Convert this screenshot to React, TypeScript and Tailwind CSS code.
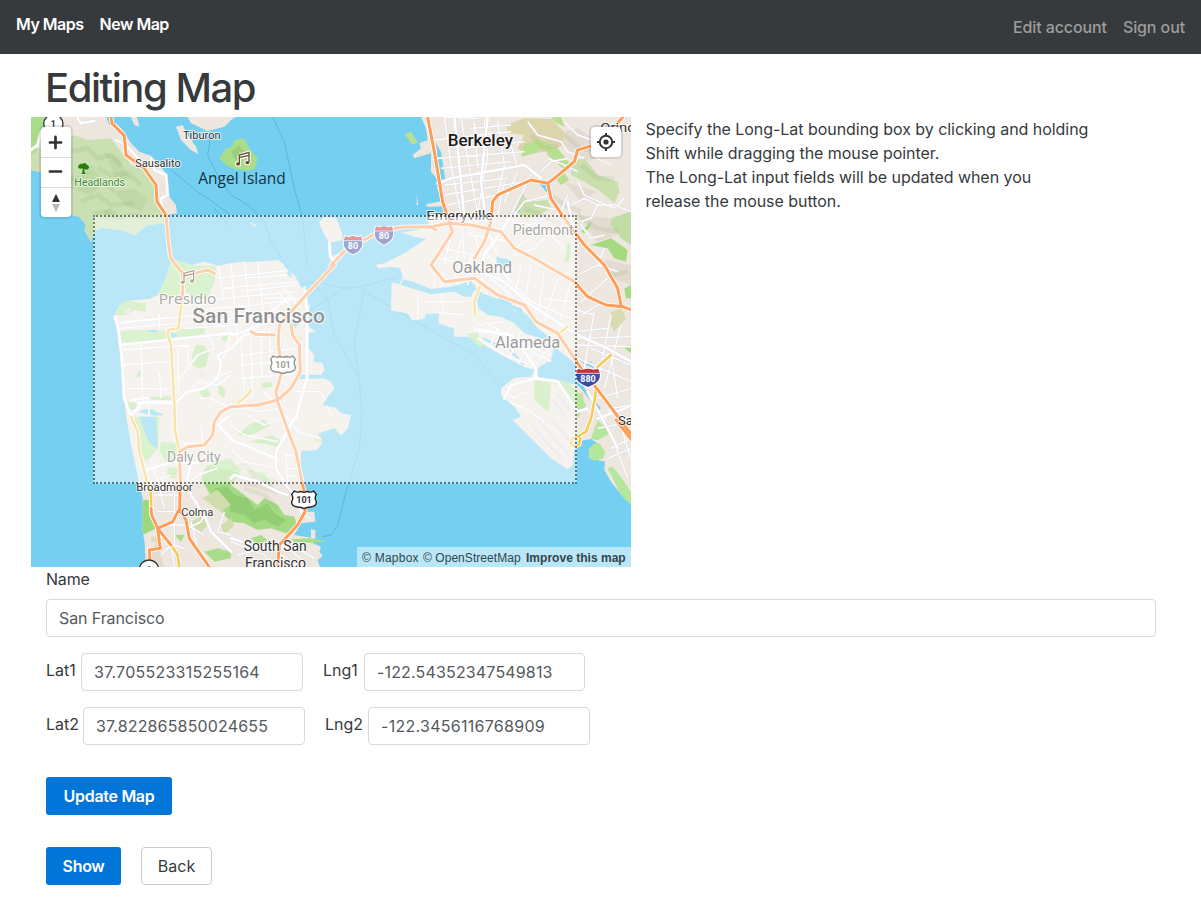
import React from "react";
import { Plus, Minus } from "lucide-react";

const LAND = "#eee7e0";
const WATER = "#75cff0";

const MARIN =
  "M0 6H225L235 30 255 25 275 45 300 85 325 110 360 122 385 150 405 175 413 215 415 245 435 270 438 295 405 300 400 325 350 330 310 360 270 345 210 338 190 350 180 382 160 345 165 330 145 305 120 300 60 300 30 172 0 165Z";
const HEADLANDS =
  "M0 165V110L40 90 90 85 130 60 170 75 240 70 270 110 300 150 335 165 370 200 378 270 400 300 400 325 350 330 310 360 270 345 210 338 190 350 180 382 160 345 165 330 145 305 120 300 60 300 30 172Z";
const TIBURON =
  "M470 6 480 25 530 48 580 35 600 15 615 6ZM435 35 455 30 470 60 495 95 502 118 480 105 450 75ZM300 6H318L325 35 310 30Z";
const PENINSULA =
  "M252 605 255 590 265 572 285 558 320 555 355 552 380 540 395 510 408 480 415 455 425 432 450 440 480 450 520 440 560 452 600 444 640 440 680 440 740 435 755 445 770 465 790 480 810 515 825 545 830 580 838 560 830 632 855 650 830 655 828 680 832 700 850 720 848 740 875 745 880 765 870 780 805 778 805 792 880 790 900 800 910 822 895 840 880 860 875 870 915 878 930 895 960 900 950 940 930 962 910 940 860 956 875 985 855 1005 810 1008 808 1070 815 1110 818 1190 850 1190 853 1220 810 1225 790 1260 840 1268 840 1243 853 1245 853 1270 845 1285 870 1295 865 1310 875 1322 860 1335 868 1360 342 1360 342 1290 335 1250 335 1150 325 1110 315 1060 300 990 285 900 280 850 270 720 262 640Z";
const EASTBAY =
  "M1170 6 1185 40 1190 75 1165 85 1170 100 1145 120 1150 130 1200 115 1200 170 1225 200 1218 218 1235 258 1185 268 1190 276 1238 274 1245 292 1192 302 1192 330 1160 345 1110 352 1150 365 1185 372 1125 412 1060 445 1035 450 1042 460 1080 455 1108 460 1115 485 1130 500 1082 503 1080 586 1130 596 1142 616 1180 612 1184 597 1225 595 1222 625 1268 640 1270 665 1310 665 1345 682 1420 725 1480 755 1512 765 1500 785 1450 788 1410 820 1410 840 1450 875 1470 905 1445 915 1500 970 1560 1030 1610 1062 1625 1050 1632 980 1680 972 1700 985 1675 1000 1675 1030 1722 1040 1720 1065 1740 1100 1780 1150 1802 1170V6Z";

const GREENS: [string, string][] = [
  ["#a9dd8a", "M0 6H45L30 50 15 110 0 118Z"],
  ["#a9dd8a", "M565 130 585 100 600 98 610 75 640 70 658 105 680 130 672 160 655 168 610 162 585 150Z"],
  ["#b6e59c", "M415 450 425 432 450 440 480 450 555 452 552 500 530 545 490 560 470 530 440 545 395 545 380 540 408 480Z"],
  ["#b7e49a", "M252 600 265 572 285 558 345 565 345 590 310 585 290 600Z"],
  ["#b6e59c", "M268 650 300 645 410 648 430 655 440 645 520 632 522 655 470 668 420 680 340 680 272 690Z"],
  ["#b0e296", "M484 720 495 690 520 692 535 710 525 755 500 760 482 750ZM505 830 530 820 540 840 520 850ZM560 805 585 825 580 850 565 840ZM355 845 420 845 420 857 370 858ZM290 860 320 865 310 885 290 880ZM320 770 332 765 332 785 315 787ZM570 670 590 655 595 670 580 682Z"],
  ["#b6e59c", "M310 905 385 905 382 1000 345 1040 325 1000ZM390 980 440 985 440 1040 410 1045 385 1010ZM410 1060 440 1055 438 1090 405 1088Z"],
  ["#9fd87c", "M335 1155 355 1155 360 1190 375 1240 335 1260Z"],
  ["#b6e59c", "M515 1070 550 1040 600 1030 620 1060 700 1075 720 1110 640 1060 600 1090 560 1110Z"],
  ["#a4da83", "M510 1090 530 1050 590 1065 630 1075 600 1110 680 1170 700 1150 740 1170 760 1200 790 1205 800 1235 780 1260 720 1240 680 1245 640 1225 600 1220 560 1180Z"],
  ["#92cd73", "M550 1120 590 1115 610 1140 650 1150 670 1185 710 1165 730 1195 765 1215 740 1235 700 1215 670 1225 640 1200 600 1190 585 1150Z"],
  ["#b0e296", "M620 960 660 925 700 915 720 930 690 945 650 965ZM660 980 720 960 760 980 740 995 690 985ZM690 805 720 800 725 815 695 820ZM580 1090 600 1085 600 1110Z"],
  ["#cfdeab", "M480 1220 510 1205 535 1225 510 1250 480 1240ZM515 1150 560 1125 600 1170 570 1190ZM570 1230 600 1210 610 1230 580 1260Z"],
  ["#a9dd8a", "M520 1310 560 1300 600 1310 600 1330 550 1340ZM660 1270 690 1260 710 1275 680 1290ZM430 1260 460 1260 450 1280ZM780 1273 840 1270 885 1278 850 1283 790 1282Z"],
  ["#dcd5ab", "M1425 30 1480 10 1560 12 1600 50 1590 95 1540 110 1480 120 1460 100 1480 60 1430 55Z"],
  ["#b7e08f", "M1480 90 1520 75 1560 85 1510 115 1470 125ZM1540 90 1580 100 1620 150 1600 165 1550 120ZM1560 6H1590L1600 35 1570 20ZM1570 185 1600 175 1615 195 1590 210ZM1120 58 1140 50 1160 82 1145 90Z"],
  ["#c9dfae", "M1450 285 1475 235 1490 260 1550 255 1560 280 1490 315ZM1620 140 1660 130 1700 180 1760 200 1765 230 1750 265 1710 230 1660 200 1620 180Z"],
  ["#bfdda4", "M1740 310 1800 290V390L1770 370 1740 330Z"],
  ["#a5da80", "M1680 390 1740 370 1790 405 1785 440 1750 430 1730 400ZM1780 520 1802 510V550H1785ZM1780 700 1802 690V715ZM1650 350 1680 320 1675 340 1660 355Z"],
  ["#d9dcb0", "M1740 590 1770 580 1785 610 1750 650 1735 625ZM1630 840 1655 830 1660 860 1630 870Z"],
  ["#b4e69b", "M1305 655 1340 655 1355 690 1350 700 1330 680ZM1510 795 1560 800 1555 880 1550 890 1510 855ZM1610 380 1620 390 1615 440 1600 440Z"],
  ["#b4e69b", "M1675 1000 1690 985 1705 985 1722 1010 1718 1030 1690 1037 1675 1030ZM1730 1060 1745 1055 1780 1100 1802 1135V1170L1770 1140ZM1680 972 1700 915 1740 955 1700 975ZM1565 795 1590 780 1640 830 1665 870 1640 910 1620 850Z"],
  ["#e3dcb2", "M790 665 812 660 815 675 790 672ZM360 1265 380 1265 380 1280 362 1280ZM350 605 362 603 362 617 350 617ZM840 950 870 965 875 985 850 980Z"],
  ["#f0dce4", "M280 585 298 578 300 593 283 595ZM505 765 525 765 525 790 505 788ZM545 760 555 760 550 770Z"],
];

const INLETS =
  "M1200 522 1260 515 1320 498 1335 515 1320 545 1300 545 1270 530 1200 538 1110 510 1082 500 1110 485ZM1330 515 1355 535 1400 552 1415 535 1440 560 1450 590 1490 600 1520 640 1548 660 1545 675 1480 655 1450 625 1410 605 1370 600 1342 580ZM1440 570 1470 580 1485 603 1455 592ZM1355 665 1395 685 1388 690 1357 675ZM1435 700 1480 745 1475 750 1440 715ZM1515 762 1560 735 1570 695 1620 735 1635 745 1632 810 1575 792 1520 790ZM1620 795 1645 775 1660 820 1710 880 1700 885 1650 820ZM1650 740 1680 740 1690 760 1665 750ZM1395 425 1440 435 1440 455 1400 455ZM1215 85 1230 110 1244 200 1230 200 1220 140ZM1525 205 1548 208 1555 230 1545 230ZM1455 285 1470 285 1460 295ZM325 905 375 905 380 1000 355 985ZM418 650 440 660 425 670ZM320 890 355 880 400 900 370 902ZM310 20 330 20ZM790 640 810 620 780 620ZM770 450 785 490 768 480ZM340 645 380 645 375 655Z";

const MINOR = [
  "M265 625 600 590M272 620 480 603M265 640 620 610M270 705 480 690M275 750 410 740M282 820 430 822M330 680 335 860M385 600 386 640M385 770 390 850M440 700 442 820M470 690 472 760M350 845 355 900M480 560 600 548M480 590 640 570M460 640 620 630M560 440 580 560M600 446 620 680M640 440 660 620M680 440 700 620M560 490 780 465M570 520 800 500M580 550 800 530M600 580 780 555M600 600 760 590M630 680 640 830M660 670 665 850M690 670 692 780M715 640 718 790M740 660 742 780M630 720 800 700M630 750 800 735M620 790 830 775M640 660 700 600 760 560M690 620 780 540M650 650 760 600",
  "M630 530 790 510M640 490 770 480M700 550 810 550M715 570 790 620M740 530 790 590M760 520 810 580M600 620 590 700 570 740M530 650 550 700 500 720 470 760 440 800M545 790 600 770M480 820 500 800 560 810 600 780M500 850 540 850 600 880M600 870 690 890 740 880M600 930 640 960 740 980M700 830 740 870 800 950M740 790 790 830 870 830 900 900M800 950 870 970M650 900 700 930 780 900M765 1020 770 1100M800 1020 765 1020M770 1060 808 1060M770 1080 800 1085M600 1000 640 1040 740 1060",
  "M360 1030 380 1100 400 1180M370 1140 440 1140M380 1190 440 1190M430 1120 430 1210M370 1100 420 1080M400 1230 470 1230 520 1260M430 1220 430 1290 460 1300M480 1220 500 1300 530 1356M530 1180 510 1220 470 1240M390 1320 420 1290 430 1356M580 1190 560 1250 600 1260M600 1280 700 1320 720 1356M640 1270 650 1340M620 1320 740 1290 820 1290M740 1310 800 1356M760 1290 820 1340M800 1300 850 1330M820 1200 840 1210M440 985 510 985M510 930 520 1030M460 1120 500 1080 560 1060",
  "M1240 6 1260 150 1290 300 1300 430M1290 6 1310 130 1340 300M1360 10 1370 120 1330 350M1320 40 1440 30M1210 75 1440 50M1300 100 1480 80M1220 130 1480 110M1230 160 1440 140M1240 240 1480 200M1250 270 1400 240M1400 20 1420 150 1400 240M1440 90 1460 160M1240 210 1430 190M1240 6 1340 10M1330 20 1340 160M1420 200 1400 300 1380 330M1460 170 1420 260M1500 180 1440 300",
  "M1260 360 1240 450M1290 370 1270 470M1240 400 1370 430M1220 430 1440 470M1300 320 1320 360 1440 380M1330 360 1350 430M1370 350 1400 420M1400 340 1450 400 1510 360M1440 320 1500 330 1560 300M1450 420 1510 400 1540 370M1360 410 1400 450M1210 450 1210 510M1240 470 1230 515M1270 460 1280 510M1320 420 1310 510M1370 480 1450 550M1400 460 1500 560M1350 490 1390 530M1440 460 1420 520M1470 450 1450 550M1500 450 1480 570M1540 470 1520 600M1580 490 1540 620M1620 500 1580 640M1540 550 1620 560M1500 560 1620 610",
  "M1160 540 1160 620M1180 560 1300 560M1200 590 1300 600M1230 540 1240 600M1340 640 1400 650 1560 740M1360 620 1500 700 1560 720M1400 640 1380 690M1440 630 1410 700M1470 650 1430 740M1500 670 1460 750M1530 680 1480 760M1560 690 1510 755M1340 670 1420 720 1500 750M1340 630 1420 620M1420 830 1450 850 1480 830 1500 840M1430 860 1500 890 1540 920",
  "M1630 650 1730 640M1640 670 1800 665M1640 690 1800 695M1650 600 1720 560M1620 580 1690 600M1690 590 1660 760M1740 600 1700 800M1770 630 1720 820M1640 730 1800 800M1680 700 1800 750M1640 790 1700 760M1740 720 1760 850M1700 850 1800 820M1720 920 1740 880 1800 870M1700 940 1800 920M1740 1000 1800 970M1730 1030 1800 1000M1740 960 1790 1090M1760 900 1802 1040M1690 900 1660 880M1660 800 1700 830",
  "M1490 20 1520 60 1590 80 1610 110 1660 130M1600 20 1640 60 1700 80M1550 130 1600 150 1640 170M1530 170 1560 140 1610 130M1610 240 1590 290 1560 310M1620 270 1660 250 1700 270 1680 310 1650 320M1640 200 1660 240 1750 280 1780 250M1650 330 1680 370 1720 360M1700 270 1750 270 1800 290M1560 240 1480 260 1450 300M1720 60 1700 130 1740 150M1720 400 1700 450 1760 470M1640 480 1700 450M1650 560 1730 490M1600 400 1560 360M1510 270 1600 290",
].join("");

const WHITE_ROADS =
  "M190 18 150 25 140 10M0 105 20 90 30 50M255 75 285 90 330 140M360 130 370 165 405 180 410 240 390 250 392 270 400 290M252 605 262 640 272 720 280 850 300 905M268 690 600 655M600 660 640 650 720 610M350 848 300 855M320 863 430 865 470 830 520 820 560 790 570 750 560 720 600 700M420 860 340 860 300 900M820 520 828 580 828 790 810 850 795 910M600 700 640 660 700 650M790 910 760 965 735 1010 735 1060 765 1110 800 1150 810 1190M600 975 640 990 735 1030M600 1090 610 1080 680 1100 740 1130 770 1140M345 1065 430 1040 500 1045M600 1270 700 1300 800 1300M480 1045 470 1090 480 1140 520 1200 540 1250 600 1310M590 905 560 930 600 970M1220 205 1260 190 1480 150 1530 190M1270 6 1290 200 1300 310M1370 6 1350 200 1365 320M1440 300 1410 350 1360 420 1350 450M1350 470 1420 500 1500 570 1640 660 1730 700 1800 740M1330 645 1440 660 1460 680 1515 760 1515 790 1580 800 1620 860 1640 890M1515 790 1440 810 1420 850M1802 870 1770 885 1700 910M1640 890 1670 880M1670 830 1740 960 1760 1000M1610 260 1625 330M1345 455 1405 460 1440 500M895 385 898 425 912 440";

const ORANGE_ROADS =
  "M240 6 243 25 280 62 285 120 340 160 375 210 378 260 405 300 412 380 418 425 430 445 455 475 455 530 452 560M455 475 490 475 530 465 550 475M1190 6 1210 110 1235 260 1255 320M1050 346 1120 336 1200 335 1255 325 1320 330 1410 350 1450 400 1510 430 1560 460 1630 500 1670 545 1725 570 1775 575 1802 585M1380 320 1385 260 1400 240 1500 195 1550 205 1570 190 1600 165 1630 140 1640 105 1690 90M1755 30 1775 6M1550 205 1560 250 1600 310 1660 390 1720 450 1760 520 1770 570M1380 320 1360 380 1330 430M1255 325 1265 350 1220 420 1200 450 1240 500 1330 490 1400 540 1480 570 1515 620 1580 655 1650 760 1720 850 1802 960M1200 335 1215 345M1755 915 1802 975M660 650 675 658 730 660M910 450 825 540 780 590 745 630 742 680 750 760 750 780 735 830 740 860 770 945 795 1010 815 1110 825 1150 822 1190 800 1230 745 1290 740 1356M780 630 785 660 805 690 808 770 780 820 740 855 680 870 600 875 570 890 550 920 545 960 520 990 470 995 445 1010 448 1100 446 1180 425 1220 380 1240 385 1280 388 1300 355 1305 358 1356M360 1180 362 1200 380 1240 420 1290M446 1185 465 1215 475 1270 535 1356M900 450 930 420 960 385 1000 375 1050 346";

const YELLOW_ROADS =
  "M452 560 442 640 412 645 410 660 420 690 430 870 432 945 445 1010M300 905 320 950 325 1010 340 1070 360 1140 361 1180M420 1290 440 1320 445 1356M620 865 650 840 660 825M1352 500 1330 560 1332 600M1585 655 1608 635M1740 720 1700 755 1692 850 1680 910 1665 950 1640 965 1625 970 1618 985 1630 995 1645 988 1648 970";

const FERRIES =
  "M540 60 530 120 560 180 600 240 650 270 700 320 720 380 770 460M725 6 760 80 790 220 815 310 828 450M420 165 500 230 600 300M550 280 600 340M800 510 850 500 940 520 990 515 1080 490 1200 510M1000 520 970 680 985 800 993 900 985 1000 945 1130 920 1230 900 1260 875 1265M850 510 890 550 910 660 980 780M1000 530 1200 645 1330 720 1400 800M830 590 950 515";

const TERRAIN =
  "M110 110 170 100 200 130 240 120 270 150M90 200 140 190 160 210 220 200 250 230M150 260 200 240 240 270 310 265M200 160 240 180 290 175 330 210M220 290 260 310 300 300 350 310M70 130 100 150 80 180M1500 60 1540 100 1580 90M1600 60 1650 100 1700 110M1650 150 1700 190 1750 190M1640 300 1700 340 1760 350M1560 240 1600 270 1650 290M1700 440 1750 480 1790 470M640 1120 700 1140 740 1180M600 1060 640 1050 680 1090 740 1100M660 1080 720 1120M1480 280 1530 300 1590 330";

function Label({
  x, y, w, size, children, weight = 400, fill = "#333", font = "Roboto, sans-serif",
}: {
  x: number; y: number; w: number; size: number; children: string; weight?: number; fill?: string; font?: string;
}) {
  return (
    <text
      x={x} y={y} textLength={w} lengthAdjust="spacingAndGlyphs" fontSize={size} fontWeight={weight}
      fill={fill} fontFamily={font} stroke="#fff" strokeOpacity=".75" strokeWidth="6" strokeLinejoin="round" paintOrder="stroke"
    >
      {children}
    </text>
  );
}

function Interstate({ x, y, n, w = 58 }: { x: number; y: number; n: string; w?: number }) {
  return (
    <g transform={`translate(${x} ${y})`}>
      <g transform={`scale(${w / 58} 1)`}>
        <path d="M-23-27Q-17-22-10-24L0-27 10-24Q17-22 23-27Q30-12 27 2Q23 18 0 28Q-23 18-27 2Q-30-12-23-27Z" fill="#3b4ba8" stroke="#fff" strokeWidth="6" paintOrder="stroke" strokeLinejoin="round" />
        <path d="M-23-27Q-17-22-10-24L0-27 10-24Q17-22 23-27L27-14H-27Z" fill="#d12f2f" />
        <path d="M-27-13H27" stroke="#fff" strokeWidth="2" />
      </g>
      <text y="12" textAnchor="middle" fontFamily="Roboto, sans-serif" fontWeight="700" fontSize="27" fill="#fff">{n}</text>
    </g>
  );
}

function UsRoute({ x, y }: { x: number; y: number }) {
  return (
    <g transform={`translate(${x} ${y})`}>
      <path
        d="M-29-26Q-20-20-10-25Q0-20 10-25Q20-20 29-26L37-16Q30-5 37 6Q38 20 20 22Q8 22 0 27Q-8 22-20 22Q-38 20-37 6Q-30-5-37-16Z"
        fill="#fff" stroke="#222" strokeWidth="4" strokeLinejoin="round"
      />
      <text y="10" textAnchor="middle" fontFamily="Roboto, sans-serif" fontWeight="700" fontSize="27" textLength="46" fill="#333">101</text>
    </g>
  );
}

function Notes({ x, y }: { x: number; y: number }) {
  return (
    <g transform={`translate(${x} ${y})`}>
      <g stroke="#fff" strokeWidth="6" fill="#fff" strokeLinejoin="round">
        <path d="M-10-12 19-20V10M-10-12V14M-10-3 19-10" fill="none" strokeWidth="10" />
        <ellipse cx="-14" cy="15" rx="6" ry="5" />
        <ellipse cx="14" cy="11" rx="6" ry="5" />
      </g>
      <path d="M-10 14V-12L19-20V10M-10-4 19-11" fill="none" stroke="#6b4a35" strokeWidth="4" />
      <ellipse cx="-14" cy="15" rx="6" ry="5" fill="#6b4a35" />
      <ellipse cx="14" cy="11" rx="6" ry="5" fill="#6b4a35" />
    </g>
  );
}

function BayMap() {
  const coast = [MARIN, TIBURON, PENINSULA, EASTBAY].join("");
  return (
    <svg viewBox="0 6 1800 1350" className="block h-[450px] w-[600px]">
      <defs>
        <clipPath id="land"><path d={coast} /></clipPath>
      </defs>
      <rect y="6" width="1800" height="1350" fill={WATER} />
      <path d={FERRIES} fill="none" stroke="#5bb7e2" strokeWidth="3" />
      <path d={coast} fill={LAND} />
      <path d="M865 320 880 305 915 308 935 360 932 375 895 385 868 335ZM655 320 675 330 672 335 658 325ZM1157 240 1162 270 1157 270ZM895 425 925 415 930 432 905 445Z" fill={LAND} />
      <path d={HEADLANDS} fill="#cadfb2" />
      <g clipPath="url(#land)">
        <path d="M1560 60 1640 40 1720 90 1680 140 1610 110ZM1640 300 1740 310 1760 360 1700 380ZM1600 200 1700 230 1650 260ZM1700 430 1800 450V510L1740 490ZM600 1100 660 1060 720 1100 740 1140 680 1120ZM340 1320 380 1280 400 1356H342Z" fill="#e4dbd0" />
        <path d="M40 200 90 150 140 190 180 150 220 200 180 240 120 220ZM220 110 260 130 300 190 260 200ZM250 230 310 220 350 250 330 290 280 270ZM180 290 240 280 280 310 230 320Z" fill="#bfd9a6" />
      </g>
      {GREENS.map(([fill, d]) => <path key={d} d={d} fill={fill} />)}
      <path d="M600 110 625 90 645 120 625 140 610 130Z" fill="#9bcf7e" />
      <g clipPath="url(#land)">
        <path d={TERRAIN} fill="none" stroke="#8fa878" strokeOpacity=".16" strokeWidth="14" strokeLinejoin="round" />
      </g>
      <path d={INLETS} fill={WATER} />
      <path d="M1100 530 1115 490 1200 512" stroke={LAND} strokeWidth="4" fill="none" />
      <g clipPath="url(#land)" fill="none" strokeLinejoin="round">
        <path d={MINOR} stroke="#dcdce6" strokeWidth="6.5" />
        <path d={MINOR} stroke="#fff" strokeWidth="4" />
        <path d="M1500 930 1600 1040M1520 915 1615 1020M1560 910 1625 990M1570 860 1600 900M1580 840 1620 890" stroke="#dcdae6" strokeWidth="7" />
      </g>
      <g fill="none" strokeLinejoin="round" strokeLinecap="round">
        <path d={WHITE_ROADS} stroke="#dadde9" strokeWidth="10" />
        <path d={WHITE_ROADS} stroke="#fff" strokeWidth="7.5" />
        <path d={YELLOW_ROADS} stroke="#fff" strokeWidth="13" />
        <path d={YELLOW_ROADS} stroke="#f4cb56" strokeWidth="8" />
        <path d={ORANGE_ROADS} stroke="#fff" strokeWidth="14" />
        <path d={ORANGE_ROADS} stroke="#ff9d57" strokeWidth="9" />
      </g>
      <g fill="#fff" stroke="#333" strokeWidth="4">
        <circle cx="67" cy="27" r="29" />
        <circle cx="354" cy="1364" r="29" />
      </g>
      <text x="67" y="36" textAnchor="middle" fontFamily="Roboto, sans-serif" fontWeight="700" fontSize="26" fill="#333">1</text>
      <text x="354" y="1373" textAnchor="middle" fontFamily="Roboto, sans-serif" fontWeight="700" fontSize="26" fill="#333">1</text>
      <path d="M155 160Q140 165 141 154Q146 144 155 146Q162 140 169 150Q178 154 172 162Q166 166 160 162L161 172 165 177H151L154 172Z" fill="#218206" stroke="#e6f0dc" strokeWidth="3" paintOrder="stroke" />
      <Notes x={635} y={132} />
      <Notes x={469} y={487} />
      <Interstate x={966} y={390} n="80" />
      <Interstate x={1059} y={361} n="80" />
      <Interstate x={1671} y={788} n="880" w={74} />
      <UsRoute x={756} y={749} />
      <UsRoute x={819} y={1154} />
      <Label x={456} y={73} w={113} size={34}>Tiburon</Label>
      <Label x={313} y={156} w={136} size={34}>Sausalito</Label>
      <Label x={130} y={212} w={152} size={33} fill="#3c8a26">Headlands</Label>
      <text x="502" y="206" textLength="262" lengthAdjust="spacingAndGlyphs" fontFamily="Open Sans, sans-serif" fontSize="48" fill="#12323f">Angel Island</text>
      <Label x={1250} y={94} w={196} size={50} weight={500} fill="#181818">Berkeley</Label>
      <Label x={1186} y={316} w={200} size={41}>Emeryville</Label>
      <Label x={1445} y={359} w={183} size={43} fill="#4c4c4c">Piedmont</Label>
      <Label x={1264} y={475} w={179} size={49}>Oakland</Label>
      <Label x={1392} y={700} w={196} size={49}>Alameda</Label>
      <Label x={383} y={566} w={173} size={46} fill="#4c4c4c" font="Open Sans, sans-serif">Presidio</Label>
      <Label x={484} y={624} w={398} size={63} fill="#222" weight={500}>San Francisco</Label>
      <Label x={408} y={1040} w={161} size={45} fill="#4c4c4c">Daly City</Label>
      <Label x={316} y={1127} w={169} size={34}>Broadmoor</Label>
      <Label x={451} y={1204} w={96} size={34}>Colma</Label>
      <Label x={638} y={1307} w={189} size={43}>South San</Label>
      <Label x={642} y={1360} w={183} size={43}>Francisco</Label>
      <Label x={1708} y={51} w={130} size={40}>Orinda</Label>
      <Label x={1761} y={930} w={220} size={40}>San Leandro</Label>
    </svg>
  );
}

const control = "flex items-center justify-center bg-white";
const field = "h-[38px] rounded border border-[#d9d9d9] px-3 text-base text-[#55595c] outline-none";
const primary = "flex h-[38px] items-center justify-center rounded-[3px] bg-[#0275d8] text-base font-semibold tracking-[-0.3px] text-white";

function MapPanel() {
  return (
    <div className="relative h-[450px] w-[600px] overflow-hidden">
      <BayMap />
      <div className="absolute left-[62px] top-[98px] h-[269px] w-[484px] border-2 border-dotted border-[#202020] bg-white opacity-50" />
      <div className="absolute left-[10px] top-[10px] w-[30px] overflow-hidden rounded shadow-[0_0_0_2px_rgba(0,0,0,0.1)]">
        <div className={`${control} h-[30px] pr-[2px]`}><Plus size={19} strokeWidth={3.4} color="#333" /></div>
        <div className={`${control} h-[30px] border-t border-[#ddd] pr-[2px] pb-[2px]`}><Minus size={19} strokeWidth={3.4} color="#333" /></div>
        <div className={`${control} h-[30px] border-t border-[#ddd]`}>
          <svg viewBox="0 0 10 18" className="h-[18px] w-[10px]">
            <path d="M5 0 9 8H1Z" fill="#333" />
            <path d="M5 18 9 10H1Z" fill="#bbb" />
          </svg>
        </div>
      </div>
      <div className={`${control} absolute right-[10px] top-[10px] h-[30px] w-[30px] rounded shadow-[0_0_0_2px_rgba(0,0,0,0.1)]`}>
        <svg viewBox="0 0 20 20" className="h-[20px] w-[20px]" fill="none" stroke="#333" strokeWidth="2">
          <circle cx="10" cy="10" r="6.2" />
          <circle cx="10" cy="10" r="2.6" fill="#333" stroke="none" />
          <path d="M10 1V4M10 16V19M1 10H4M16 10H19" />
        </svg>
      </div>
      <div className="absolute bottom-0 right-0 flex h-5 w-[274px] items-center whitespace-nowrap bg-white/50 pl-[5px] pt-[2px] font-['Liberation_Sans'] text-[12px] text-[#33444b]">
        <span className="w-[61px] tracking-[0.25px]">© Mapbox</span>
        <span className="w-[103px] tracking-[0.05px]">© OpenStreetMap</span>
        <span className="font-bold tracking-[0.02px]">Improve this map</span>
      </div>
    </div>
  );
}

export default function App() {
  return (
    <div className="h-[901px] overflow-hidden bg-white font-['Inter',sans-serif] text-base leading-6 text-[#373a3c]">
      <nav className="flex h-[54px] justify-between bg-[#373a3c] px-4 font-medium">
        <div className="flex gap-4 pt-3 font-semibold tracking-[-0.5px] text-white">
          <a>My Maps</a>
          <a>New Map</a>
        </div>
        <div className="flex gap-4 pt-[15px] tracking-[-0.1px] text-[#9b9d9e]">
          <a>Edit account</a>
          <a>Sign out</a>
        </div>
      </nav>
      <main className="pl-[31px] pr-[45px]">
        <h1 className="h-[63px] pl-[14px] pt-[12px] text-[40px] font-medium leading-[44px] tracking-[-1.45px]">Editing Map</h1>
        <div className="flex">
          <MapPanel />
          <p className="whitespace-nowrap pl-[14.5px] tracking-[-0.045px]">
            Specify the Long-Lat bounding box by clicking and holding<br />
            Shift while dragging the mouse pointer.<br />
            The Long-Lat input fields will be updated when you<br />
            release the mouse button.
          </p>
        </div>
        <form className="pl-[15px]">
          <label className="block tracking-[-0.2px]">Name</label>
          <input className={`${field} mt-2 block w-full tracking-[-0.1px]`} defaultValue="San Francisco" />
          <div className="mt-4 flex">
            <label className="w-[35px] pt-[5px]">Lat1</label>
            <input className={`${field} w-[222px] tracking-[0.25px]`} defaultValue="37.705523315255164" />
            <label className="ml-5 w-[41px] pt-[5px]">Lng1</label>
            <input className={`${field} w-[221px] tracking-[0.16px]`} defaultValue="-122.54352347549813" />
          </div>
          <div className="mt-4 flex">
            <label className="w-[37px] pt-[5px]">Lat2</label>
            <input className={`${field} w-[222px] tracking-[0.16px]`} defaultValue="37.822865850024655" />
            <label className="ml-5 w-[43px] pt-[5px]">Lng2</label>
            <input className={`${field} w-[222px] tracking-[0.28px]`} defaultValue="-122.3456116768909" />
          </div>
          <button type="button" className={`${primary} mt-8 w-[126px]`}>Update Map</button>
          <div className="mt-8 flex gap-5">
            <button type="button" className={`${primary} w-[75px]`}>Show</button>
            <button type="button" className="flex h-[38px] w-[71px] items-center justify-center rounded border border-[#ccc] bg-white">Back</button>
          </div>
        </form>
      </main>
    </div>
  );
}
